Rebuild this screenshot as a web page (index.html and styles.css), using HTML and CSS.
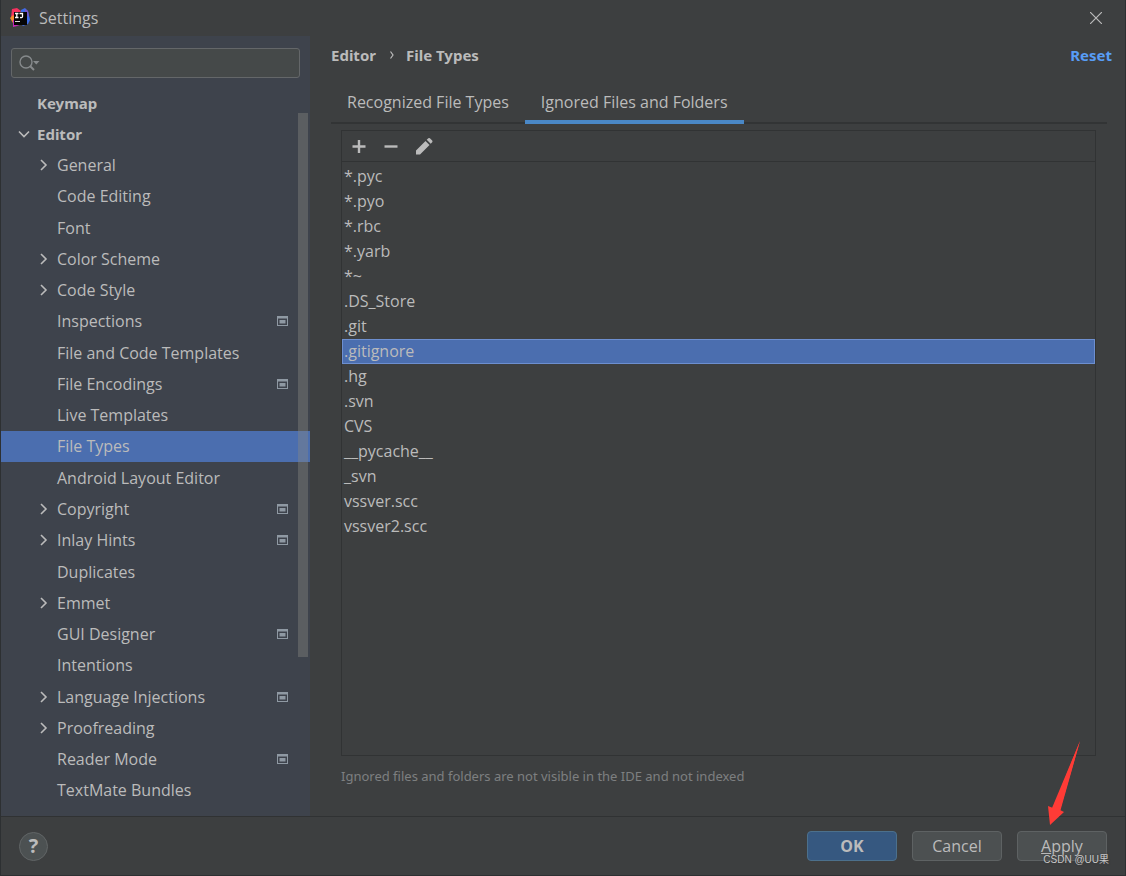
FILE: index.html
```html
<!DOCTYPE html>
<html lang="en">
<head>
<meta charset="utf-8">
<title>Settings</title>
<link rel="stylesheet" href="styles.css">
</head>
<body>
<svg class="defs" aria-hidden="true">
  <symbol id="right" viewBox="0 0 12 12"><path d="M4 1l5 5-5 5" fill="none" stroke="currentColor" stroke-width="1.6"/></symbol>
  <symbol id="down" viewBox="0 0 12 12"><path d="M1 3.5l5 5 5-5" fill="none" stroke="currentColor" stroke-width="1.6"/></symbol>
  <symbol id="project" viewBox="0 0 11 10"><path d="M0 0h11v10H0zM1 2.500v6.500h9v-6.500z" fill="#8f99a3" fill-rule="evenodd"/><path d="M2.500 4h6v3.500h-6z" fill="#8f99a3"/></symbol>
</svg>
<div class="window">
  <header class="titlebar">
    <svg class="logo" viewBox="0 0 20 20" aria-hidden="true">
      <path d="M2 1l5-1 4 3-3 6-7 1z" fill="#f7315f"/>
      <path d="M0 10l3-3 3 3-3 5z" fill="#f58a2c"/>
      <path d="M3 12l5-2 4 6-5 2-4 1z" fill="#c22bb8"/>
      <path d="M11 2l4-2 3 3 2 9-2 4-5 2-4-4z" fill="#3c6de8"/>
      <path d="M15 1l3 2 1 6-4-3z" fill="#7a55c8"/>
      <path d="M4 4h13v13H4z" fill="#050505"/>
      <path d="M5 5.500h3.500M6.800 5.500v4M5 9.500h3.500M9.500 5.500h3v3q0 1.500-2.500 1" fill="none" stroke="#fff" stroke-width="1.300"/>
      <path d="M5 13h5v1H5z" fill="#ddd"/>
    </svg>
    <h1 class="title">Settings</h1>
    <button class="close" aria-label="Close"><svg viewBox="0 0 12 12"><path d="M0 0l12 12M12 0L0 12" stroke="currentColor" stroke-width="1.200"/></svg></button>
  </header>
  <div class="body">
    <aside class="sidebar">
      <label class="search">
        <svg viewBox="0 0 22 16" aria-hidden="true"><circle cx="7" cy="7" r="6" fill="none" stroke="currentColor" stroke-width="1.400"/><path d="M11 11l4 4" stroke="currentColor" stroke-width="2"/><path d="M14 6h6.500l-3.200 3.500z" fill="currentColor"/></svg>
        <input type="text" aria-label="Search settings">
      </label>
      <nav class="tree" aria-label="Settings sections">
        <a class="node top" href="#">Keymap</a>
        <a class="node top" href="#"><svg class="arrow"><use href="#down"/></svg>Editor</a>
        <a class="node" href="#"><svg class="arrow"><use href="#right"/></svg>General</a>
        <a class="node" href="#">Code Editing</a>
        <a class="node" href="#">Font</a>
        <a class="node" href="#"><svg class="arrow"><use href="#right"/></svg>Color Scheme</a>
        <a class="node" href="#"><svg class="arrow"><use href="#right"/></svg>Code Style</a>
        <a class="node" href="#">Inspections<svg class="mark"><use href="#project"/></svg></a>
        <a class="node" href="#">File and Code Templates</a>
        <a class="node" href="#">File Encodings<svg class="mark"><use href="#project"/></svg></a>
        <a class="node" href="#">Live Templates</a>
        <a class="node selected" href="#" aria-current="page">File Types</a>
        <a class="node" href="#">Android Layout Editor</a>
        <a class="node" href="#"><svg class="arrow"><use href="#right"/></svg>Copyright<svg class="mark"><use href="#project"/></svg></a>
        <a class="node" href="#"><svg class="arrow"><use href="#right"/></svg>Inlay Hints<svg class="mark"><use href="#project"/></svg></a>
        <a class="node" href="#">Duplicates</a>
        <a class="node" href="#"><svg class="arrow"><use href="#right"/></svg>Emmet</a>
        <a class="node" href="#">GUI Designer<svg class="mark"><use href="#project"/></svg></a>
        <a class="node" href="#">Intentions</a>
        <a class="node" href="#"><svg class="arrow"><use href="#right"/></svg>Language Injections<svg class="mark"><use href="#project"/></svg></a>
        <a class="node" href="#"><svg class="arrow"><use href="#right"/></svg>Proofreading</a>
        <a class="node" href="#">Reader Mode<svg class="mark"><use href="#project"/></svg></a>
        <a class="node" href="#">TextMate Bundles</a>
      </nav>
      <div class="thumb"></div>
    </aside>
    <main class="content">
      <div class="crumbs">
        <span>Editor</span>
        <svg class="sep" viewBox="0 0 4 8" aria-hidden="true"><path d="M.5.500L3 4 .5 7.500" fill="none" stroke="currentColor" stroke-width="1.200"/></svg>
        <span>File Types</span>
        <a class="reset" href="#">Reset</a>
      </div>
      <div class="tabs" role="tablist">
        <button class="tab" role="tab" aria-selected="false">Recognized File Types</button>
        <button class="tab active" role="tab" aria-selected="true">Ignored Files and Folders</button>
      </div>
      <section class="panel">
        <div class="tools">
          <button aria-label="Add"><svg viewBox="0 0 18 18"><path d="M9 3v13M2.500 9.500h13" stroke="currentColor" stroke-width="2.400"/></svg></button>
          <button aria-label="Remove"><svg viewBox="0 0 18 18"><path d="M2.500 9.500h13" stroke="currentColor" stroke-width="2.400"/></svg></button>
          <button aria-label="Edit"><svg viewBox="0 0 18 18"><path d="M1 17.500v-4L10.500 4l4 4L5 17.500zM11.700 2.800L13.300 1.300q.8-.6 1.600 0l2.300 2.300q.7.800 0 1.600l-1.500 1.600z" fill="currentColor"/></svg></button>
        </div>
        <ul class="list" role="listbox" aria-label="Ignored files and folders">
          <li role="option">*.pyc</li>
          <li role="option">*.pyo</li>
          <li role="option">*.rbc</li>
          <li role="option">*.yarb</li>
          <li role="option">*~</li>
          <li role="option">.DS_Store</li>
          <li role="option">.git</li>
          <li role="option" class="chosen" aria-selected="true">.gitignore</li>
          <li role="option">.hg</li>
          <li role="option">.svn</li>
          <li role="option">CVS</li>
          <li role="option">__pycache__</li>
          <li role="option">_svn</li>
          <li role="option">vssver.scc</li>
          <li role="option">vssver2.scc</li>
        </ul>
      </section>
      <p class="hint">Ignored files and folders are not visible in the IDE and not indexed</p>
    </main>
  </div>
  <footer class="footer">
    <button class="help" aria-label="Help">?</button>
    <button class="btn primary">OK</button>
    <button class="btn">Cancel</button>
    <button class="btn"><u>A</u>pply</button>
  </footer>
  <svg class="pointer" viewBox="0 0 34 86" aria-hidden="true"><path d="M32 1L5 68 0 66l2 19 14-13-4-2z" fill="#ff3b36"/><path d="M32 1L4 68l8 4z" fill="#ff3b36"/></svg>
  <span class="watermark">CSDN @UU果</span>
</div>
</body>
</html>
```
FILE: styles.css
```css
* { box-sizing: border-box; }
body {
  margin: 0;
  background: #3d3f40;
  color: #bbbbbb;
  font: 16px/20px "Open Sans", "Noto Sans CJK SC", sans-serif;
}
button, input { font: inherit; color: inherit; }
button { padding: 0; border: 0; background: none; }
a { color: inherit; text-decoration: none; }
.defs { position: absolute; width: 0; height: 0; }
.window {
  position: relative;
  display: flex;
  flex-direction: column;
  min-height: 100vh;
  border: 1px solid #2d3032;
  border-top: 0;
}
.titlebar {
  display: flex;
  align-items: center;
  height: 36px;
  padding: 0 23px 0 9px;
  gap: 9px;
}
.logo { width: 20px; height: 20px; }
.title { margin: 0; font-size: 16px; font-weight: 400; }
.close { display: flex; margin-left: auto; }
.close svg { width: 12px; height: 12px; }
.body { display: flex; flex: 1; }
.sidebar {
  position: relative;
  display: flex;
  flex-direction: column;
  width: 309px;
  flex-shrink: 0;
  padding: 12px 0 10px;
  gap: 9px;
  background: #3e434c;
}
.search {
  display: flex;
  align-items: center;
  height: 30px;
  margin: 0 10px;
  padding: 0 7px;
  border: 1px solid #646769;
  border-radius: 3px;
  background: #454949;
  color: #868a8c;
}
.search svg { width: 22px; height: 16px; }
.search input { flex: 1; min-width: 0; border: 0; outline: 0; background: none; }
.tree { display: grid; flex: 1; grid-auto-rows: minmax(31px, 1fr); }
.node {
  display: flex;
  align-items: center;
  padding: 0 22px 0 56px;
}
.node.top {
  padding-left: 36px;
  font-family: "Noto Sans", sans-serif;
  font-size: 15px;
  font-weight: 700;
}
.node.selected { background: #4b6eaf; }
.arrow { width: 12px; height: 12px; margin-left: -20px; margin-right: 8px; }
.top .arrow { margin-left: -19px; margin-right: 7px; }
.mark { width: 11px; height: 10px; margin-left: auto; }
.thumb {
  position: absolute;
  top: 77px;
  right: 2px;
  width: 10px;
  height: 544px;
  background: rgba(136, 136, 130, 0.4);
}
.content {
  display: flex;
  flex-direction: column;
  flex: 1;
  min-width: 0;
  padding: 9px 13px 30px 21px;
}
.crumbs {
  display: flex;
  align-items: center;
  height: 20px;
  font-family: "Noto Sans", sans-serif;
  font-size: 15px;
  font-weight: 700;
}
.sep { width: 4px; height: 8px; margin: 0 12px 0 14px; }
.reset { margin-left: auto; color: #589df6; }
.tabs {
  display: flex;
  margin: 17px 5px 6px 0;
  border-bottom: 2px solid #323435;
}
.tab {
  height: 42px;
  margin-bottom: -2px;
  padding: 2px 16px 0;
  border-bottom: 4px solid transparent;
}
.tab.active { border-color: #4a88c7; }
.panel {
  display: flex;
  flex-direction: column;
  flex: 1;
  margin: 0 16px 10px 10px;
  border: 1px solid #313334;
}
.tools {
  display: flex;
  align-items: center;
  gap: 14px;
  height: 31px;
  padding-left: 8px;
  border-bottom: 1px solid #313334;
}
.tools button { display: flex; }
.tools button:last-child { margin-left: 1px; }
.tools svg { width: 18px; height: 18px; }
.list { margin: 0; padding: 2px 0; list-style: none; }
.list li { height: 25px; padding: 0 2px; line-height: 25px; }
.list .chosen { background: #4b6eaf; box-shadow: inset 0 0 0 1px #6d8fd0; }
.hint {
  margin: 0 10px;
  font-family: "Noto Sans", sans-serif;
  font-size: 13px;
  color: #7d7f80;
}
.footer {
  display: flex;
  align-items: center;
  gap: 15px;
  height: 59px;
  padding: 0 18px;
  border-top: 1px solid #303233;
}
.help {
  width: 29px;
  height: 29px;
  margin-right: auto;
  border: 1px solid #616566;
  border-radius: 50%;
  background: #4c5152;
  font-size: 20px;
  font-weight: 700;
}
.btn {
  width: 90px;
  height: 30px;
  border: 1px solid #5e6263;
  border-radius: 4px;
  background: #4c5051;
}
.primary { border-color: #4c708c; background: #365880; font-weight: 700; }
.pointer { position: absolute; right: 43px; bottom: 49px; width: 34px; height: 86px; }
.watermark {
  position: absolute;
  right: 16px;
  bottom: 5px;
  font: 10px/20px "Liberation Sans", "Noto Sans CJK SC", sans-serif;
  color: #c8c8c8;
  text-shadow: 0 0 2px #333;
}
```
